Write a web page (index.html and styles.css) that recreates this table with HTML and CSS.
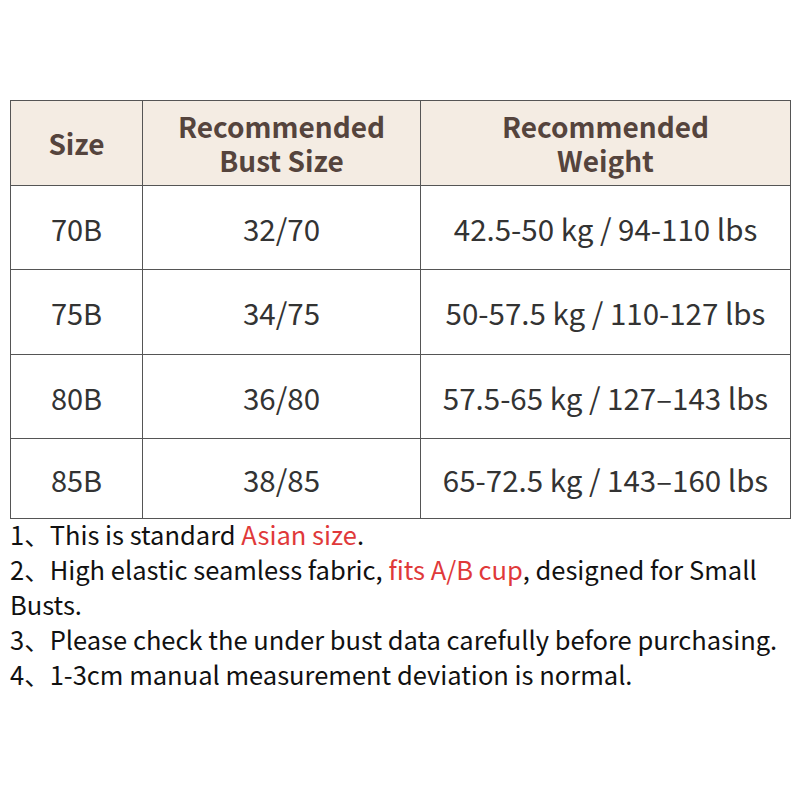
FILE: index.html
```html
<!DOCTYPE html>
<html>
<head>
<meta charset="utf-8">
<link rel="stylesheet" href="styles.css">
</head>
<body>
<div class="page">
<table class="sizes">
<thead>
<tr class="head"><th class="c1">Size</th><th class="c2"><span class="ln">Recommended</span><span class="ln">Bust Size</span></th><th class="c3"><span class="ln">Recommended</span><span class="ln">Weight</span></th></tr>
</thead>
<tbody>
<tr class="r"><td>70B</td><td>32/70</td><td>42.5-50 kg / 94-110 lbs</td></tr>
<tr class="r tall"><td>75B</td><td>34/75</td><td>50-57.5 kg / 110-127 lbs</td></tr>
<tr class="r"><td>80B</td><td>36/80</td><td>57.5-65 kg / 127–143 lbs</td></tr>
<tr class="r last"><td>85B</td><td>38/85</td><td>65-72.5 kg / 143–160 lbs</td></tr>
</tbody>
</table>
<div class="notes">
<p>1、This is standard <span class="red">Asian size</span>.</p>
<p>2、High elastic seamless fabric, <span class="red">fits A/B cup</span>, designed for Small Busts.</p>
<p>3、Please check the under bust data carefully before purchasing.</p>
<p>4、1-3cm manual measurement deviation is normal.</p>
</div>
</div>
</body>
</html>
```
FILE: styles.css
```css
html, body { margin: 0; padding: 0; background: #fff; }
.page { width: 800px; height: 800px; padding-top: 100px; box-sizing: border-box; }
.sizes {
  margin-left: 10px;
  border-collapse: collapse;
  width: 777px;
  table-layout: fixed;
  font-family: "Noto Sans CJK SC", "Noto Sans", sans-serif;
  color: #333;
}
.sizes th, .sizes td { border: 1px solid #555; text-align: center; padding: 0; }
.head th {
  background: #f4ece3;
  color: #55443d;
  font-weight: 700;
  font-size: 28px;
  line-height: 34px;
  height: 84px;
}
.ln { display: block; }
.c1 { width: 131px; }
.c2 { width: 277px; }
.c3 { width: 369px; }
.r td { height: 83px; font-size: 29.5px; font-weight: 400; line-height: 36px; }
.r td:first-child { font-size: 29px; }
.r.tall td { height: 84px; }
.r.last td { height: 79px; }
.notes {
  font-family: "Noto Sans CJK SC", "Noto Sans", sans-serif;
  font-size: 25.5px;
  line-height: 35px;
  color: #111;
  margin-top: -3px;
  padding-left: 10px;
  padding-right: 20px;
}
.notes p { margin: 0; }
.red { color: #e0393a; }
```
